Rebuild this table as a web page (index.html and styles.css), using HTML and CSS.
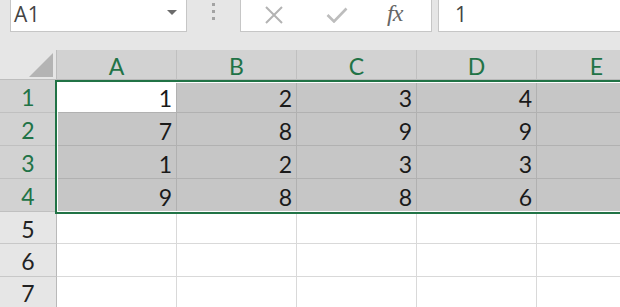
FILE: index.html
```html
<!DOCTYPE html>
<html lang="en">
<head>
    <meta charset="UTF-8">
    <title>Book1</title>
    <link rel="stylesheet" href="styles.css">
</head>
<body>
    <div class="formula-bar">
        <div class="name-box">
            <span class="cell-ref">A1</span>
            <span class="caret"></span>
        </div>
        <div class="grip"><i></i><i></i><i></i></div>
        <div class="fn-buttons">
            <svg class="fn-icon" width="22" height="18" viewBox="0 0 22 18">
                <path d="M3 1 L19 17 M19 1 L3 17" stroke="#b3b3b3" stroke-width="2" fill="none"/>
            </svg>
            <svg class="fn-icon" width="22" height="16" viewBox="0 0 22 16">
                <path d="M1.5 8 L8 14.5 L20.5 1.5" stroke="#bdbdbd" stroke-width="2.6" fill="none"/>
            </svg>
            <span class="fx">fx</span>
        </div>
        <div class="formula-input">1</div>
    </div>

    <div class="sheet">
        <!-- column headers -->
        <div class="corner"><span class="corner-mark"></span></div>
        <div class="hdr col sel">A</div>
        <div class="hdr col sel">B</div>
        <div class="hdr col sel">C</div>
        <div class="hdr col sel">D</div>
        <div class="hdr col sel">E</div>

        <!-- data rows -->
        <div class="hdr row sel">1</div>
        <div class="cell active">1</div>
        <div class="cell sel">2</div>
        <div class="cell sel">3</div>
        <div class="cell sel">4</div>
        <div class="cell sel"></div>

        <div class="hdr row sel">2</div>
        <div class="cell sel">7</div>
        <div class="cell sel">8</div>
        <div class="cell sel">9</div>
        <div class="cell sel">9</div>
        <div class="cell sel"></div>

        <div class="hdr row sel">3</div>
        <div class="cell sel">1</div>
        <div class="cell sel">2</div>
        <div class="cell sel">3</div>
        <div class="cell sel">3</div>
        <div class="cell sel"></div>

        <div class="hdr row sel">4</div>
        <div class="cell sel">9</div>
        <div class="cell sel">8</div>
        <div class="cell sel">8</div>
        <div class="cell sel">6</div>
        <div class="cell sel"></div>

        <div class="hdr row">5</div>
        <div class="cell"></div>
        <div class="cell"></div>
        <div class="cell"></div>
        <div class="cell"></div>
        <div class="cell"></div>

        <div class="hdr row">6</div>
        <div class="cell"></div>
        <div class="cell"></div>
        <div class="cell"></div>
        <div class="cell"></div>
        <div class="cell"></div>

        <div class="hdr row">7</div>
        <div class="cell"></div>
        <div class="cell"></div>
        <div class="cell"></div>
        <div class="cell"></div>
        <div class="cell"></div>

        <!-- selected range outline A1:E4 -->
        <div class="selection"></div>
    </div>
</body>
</html>
```

FILE: styles.css
```css
body {
    margin: 0;
    width: 620px;
    height: 307px;
    overflow: hidden;
    background: #e6e6e6;
    font-family: Lato, "Open Sans", sans-serif;
}

/* Formula bar */
.formula-bar {
    display: flex;
    height: 50px;
    padding-left: 10px;
    box-sizing: border-box;
}

.name-box,
.fn-buttons,
.formula-input {
    height: 32px;
    box-sizing: border-box;
    background: #fff;
    border: 1px solid #c6c6c6;
    border-top: none;
}

.name-box {
    width: 177px;
    display: flex;
    align-items: center;
    justify-content: space-between;
    padding: 0 9px 3px 3px;
    font-family: "Open Sans", sans-serif;
    font-size: 21px;
    color: #444;
}

.cell-ref {
    letter-spacing: 0.5px;
}

.caret {
    width: 0;
    height: 0;
    border-left: 5px solid transparent;
    border-right: 5px solid transparent;
    border-top: 5px solid #6b6b6b;
    margin-top: -3px;
}

.grip {
    width: 53px;
    display: flex;
    flex-direction: column;
    align-items: center;
    gap: 4px;
    padding-top: 3px;
    box-sizing: border-box;
}

.grip i {
    display: block;
    width: 3px;
    height: 3px;
    background: #a3a3a3;
}

.fn-buttons {
    width: 192px;
    display: flex;
    align-items: center;
    padding: 0 0 2px 22px;
}

.fn-icon {
    margin-right: 41px;
}

.fx {
    font-family: "Liberation Serif", serif;
    font-style: italic;
    font-size: 24px;
    line-height: 1;
    color: #666;
    margin: -4px 0 0 -2px;
    letter-spacing: -1px;
}

.formula-input {
    flex: 1;
    margin-left: 6px;
    border-right: none;
    padding: 0 0 3px 16px;
    display: flex;
    align-items: center;
    font-family: "Open Sans", sans-serif;
    font-size: 21px;
    color: #444;
}

/* Sheet grid */
.sheet {
    position: relative;
    display: grid;
    grid-template-columns: 57px repeat(5, 120px);
    grid-template-rows: 30px repeat(4, 33px) repeat(3, 32.4px);
    background: #fff;
    font-size: 23px;
}

.corner {
    position: relative;
    background: #e6e6e6;
    border-right: 1px solid #bdbdbd;
    border-bottom: 1px solid #bdbdbd;
}

.corner-mark {
    position: absolute;
    right: 3px;
    bottom: 2px;
    width: 0;
    height: 0;
    border-left: 24px solid transparent;
    border-bottom: 24px solid #b4b4b4;
}

.hdr {
    display: flex;
    align-items: center;
    justify-content: center;
    background: #e6e6e6;
    color: #222;
    border-right: 1px solid #c8c8c8;
    border-bottom: 1px solid #c8c8c8;
    padding-top: 2px;
}

.hdr.sel {
    background: #d2d2d2;
    color: #217346;
    border-color: #c0c0c0;
}

.hdr.row {
    border-right-color: #b9b9b9;
}

.hdr.col {
    border-bottom-color: #b9b9b9;
}

.cell {
    display: flex;
    align-items: center;
    justify-content: flex-end;
    padding: 4px 4px 0 0;
    color: #1a1a1a;
    border-right: 1px solid #d9d9d9;
    border-bottom: 1px solid #d9d9d9;
}

.cell.sel {
    background: #c6c6c6;
    border-color: #b1b1b1;
}

.cell.active {
    background: #fff;
    border-right-color: #b1b1b1;
    border-bottom-color: #b1b1b1;
}

.selection {
    position: absolute;
    left: 55px;
    top: 30px;
    width: 600px;
    height: 134px;
    box-sizing: border-box;
    border: 2px solid #217346;
    box-shadow: inset 0 0 0 1px #fff;
    pointer-events: none;
}
```
